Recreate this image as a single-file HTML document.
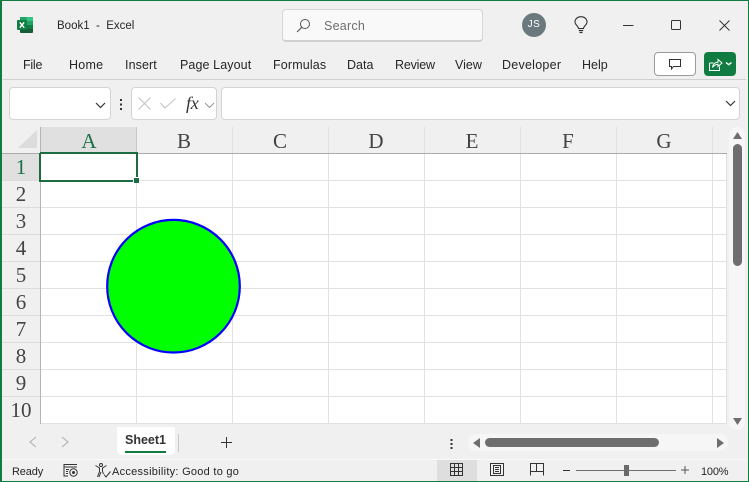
<!DOCTYPE html>
<html>
<head>
<meta charset="utf-8">
<style>
html,body{margin:0;padding:0;}
body{width:749px;height:482px;overflow:hidden;position:relative;background:#f0f0f0;font-family:"Liberation Sans",sans-serif;}
.t{position:absolute;white-space:nowrap;font-size:12.5px;line-height:16px;color:#262626;letter-spacing:.25px;}
.b{position:absolute;box-sizing:border-box;}
.ch{position:absolute;top:129px;width:96px;text-align:center;font:21px/24px "Liberation Serif",serif;color:#444;}
.rh{position:absolute;left:2px;width:38px;text-align:center;font:21px/27px "Liberation Serif",serif;color:#444;}
svg{position:absolute;overflow:visible;}
</style>
</head>
<body>
<!-- title bar -->
<svg style="left:17px;top:17px" width="16" height="16" viewBox="0 0 16 16">
<rect x="3" y="0" width="13" height="16" rx="1" fill="#185c37"/>
<rect x="3" y="0" width="13" height="4" fill="#21a366"/>
<rect x="9.500" y="0" width="6.500" height="4" fill="#33c481"/>
<rect x="3" y="4" width="13" height="4" fill="#21a366"/>
<rect x="3" y="8" width="13" height="4" fill="#107c41"/>
<rect x="0" y="3" width="10" height="10" rx="1" fill="#107c41"/>
<path d="M2.800 5.300L7.200 10.700M7.200 5.300L2.800 10.700" stroke="#fff" stroke-width="1.500" fill="none"/>
</svg>
<div class="t" style="left:57px;top:18px;font-size:11.500px;letter-spacing:0;">Book1&nbsp; - &nbsp;Excel</div>

<div class="b" style="left:282px;top:9px;width:201px;height:33px;background:#f9f9f9;border:1px solid #d6d6d6;border-bottom:2px solid #cfcfcf;border-radius:4px;"></div>
<svg style="left:296px;top:18px" width="15" height="15" viewBox="0 0 15 15"><circle cx="9" cy="6" r="4.500" fill="none" stroke="#555" stroke-width="1"/><path d="M5.700 9.300L1 14" stroke="#555" stroke-width="1.100" fill="none"/></svg>
<div class="t" style="left:324px;top:18px;color:#6e6e6e;">Search</div>

<div class="b" style="left:522px;top:13px;width:24px;height:24px;border-radius:50%;background:#69797e;color:#fff;font-size:10px;line-height:24px;text-align:center;letter-spacing:.5px;">JS</div>
<svg style="left:574px;top:16px" width="14" height="18" viewBox="0 0 14 18"><path d="M4.500 12.500C4.500 10 1 9 1 6C1 2.800 3.700 .7 7 .7S13 2.800 13 6C13 9 9.500 10 9.500 12.500Z" fill="none" stroke="#333" stroke-width="1.100"/><path d="M4.800 14.500H9.200M5.500 16.500H8.500" stroke="#333" stroke-width="1.300" fill="none"/></svg>
<svg style="left:623px;top:25px" width="11" height="1" viewBox="0 0 11 1"><rect width="10.500" height="1" fill="#333"/></svg>
<svg style="left:671px;top:20px" width="10" height="10" viewBox="0 0 10 10"><rect x=".5" y=".5" width="9" height="9" rx="1" fill="none" stroke="#333" stroke-width="1"/></svg>
<svg style="left:719px;top:20px" width="11" height="11" viewBox="0 0 11 11"><path d="M.5 .5L10.500 10.500M10.500 .5L.5 10.500" stroke="#333" stroke-width="1" fill="none"/></svg>

<!-- menu -->
<div class="t" style="left:23px;top:57px;letter-spacing:-.25px;">File</div>
<div class="t" style="left:69px;top:57px;">Home</div>
<div class="t" style="left:125px;top:57px;letter-spacing:.1px;">Insert</div>
<div class="t" style="left:180px;top:57px;letter-spacing:.1px;">Page Layout</div>
<div class="t" style="left:273px;top:57px;letter-spacing:.15px;">Formulas</div>
<div class="t" style="left:347px;top:57px;letter-spacing:0;">Data</div>
<div class="t" style="left:395px;top:57px;letter-spacing:-.2px;">Review</div>
<div class="t" style="left:455px;top:57px;letter-spacing:0;">View</div>
<div class="t" style="left:502px;top:57px;">Developer</div>
<div class="t" style="left:582px;top:57px;letter-spacing:0;">Help</div>

<div class="b" style="left:654px;top:52px;width:42px;height:24px;background:#fff;border:1px solid #9b9b9b;border-radius:4px;"></div>
<svg style="left:669px;top:59px" width="12" height="11" viewBox="0 0 12 11"><path d="M.5 .5H11.500V7.500H4.500L2.500 10V7.500H.5Z" fill="none" stroke="#333" stroke-width="1"/></svg>
<div class="b" style="left:704px;top:52px;width:32px;height:24px;background:#107c41;border-radius:4px;"></div>
<svg style="left:709px;top:58px" width="24" height="13" viewBox="0 0 24 13"><path d="M.5 5V12.500H10.500V8.500M.5 5L4.500 5" fill="none" stroke="#fff" stroke-width="1"/><path d="M3.500 9.500C4 6 6 4.300 9 4.300V1.500L13 5L9 8.500V6.200C7 6.200 5 7.500 3.500 9.500Z" fill="none" stroke="#fff" stroke-width="1"/><path d="M17 4.500L19.800 6.700L22.500 4.500" fill="none" stroke="#fff" stroke-width="1.400"/></svg>

<!-- ribbon separator -->
<div class="b" style="left:3px;top:79px;width:743px;height:1px;background:#d0d0d0;"></div>

<!-- formula bar -->
<div class="b" style="left:9px;top:87px;width:102px;height:33px;background:#fff;border:1px solid #d4d4d4;border-radius:4px;"></div>
<svg style="left:95px;top:102px" width="12" height="7" viewBox="0 0 12 7"><path d="M1 1L5.500 5.500L10 1" fill="none" stroke="#333" stroke-width="1.200"/></svg>
<svg style="left:119px;top:99px" width="4" height="11" viewBox="0 0 4 11"><rect x="1" y="0" width="2" height="2" fill="#333"/><rect x="1" y="4.500" width="2" height="2" fill="#333"/><rect x="1" y="9" width="2" height="2" fill="#333"/></svg>
<div class="b" style="left:131px;top:87px;width:86px;height:33px;background:#fff;border:1px solid #d4d4d4;border-radius:4px;"></div>
<svg style="left:138px;top:97px" width="13" height="13" viewBox="0 0 13 13"><path d="M.5 .5L12.500 12.500M12.500 .5L.5 12.500" stroke="#c4c4c4" stroke-width="1.100" fill="none"/></svg>
<svg style="left:160px;top:98px" width="16" height="11" viewBox="0 0 16 11"><path d="M.5 5L5 10L15.500 .5" stroke="#c4c4c4" stroke-width="1.100" fill="none"/></svg>
<div class="t" style="left:186px;top:93px;font:italic 18px/20px 'Liberation Serif',serif;color:#333;letter-spacing:-.3px;">fx</div>
<svg style="left:204px;top:102px" width="12" height="7" viewBox="0 0 12 7"><path d="M1 1L5.500 5.500L10 1" fill="none" stroke="#999" stroke-width="1.100"/></svg>
<div class="b" style="left:221px;top:87px;width:519px;height:33px;background:#fff;border:1px solid #d4d4d4;border-radius:4px;"></div>
<svg style="left:725px;top:100px" width="12" height="7" viewBox="0 0 12 7"><path d="M1 1L5.500 5.500L10 1" fill="none" stroke="#333" stroke-width="1.200"/></svg>

<!-- grid -->
<svg style="left:0;top:0" width="749" height="482" viewBox="0 0 749 482" shape-rendering="crispEdges">
<rect x="2" y="127" width="725" height="26" fill="#f0f0f0"/>
<rect x="41" y="153" width="686" height="271" fill="#fff"/>
<rect x="41" y="127" width="96" height="26" fill="#e0e0e0"/>
<rect x="2" y="154" width="38" height="27" fill="#e0e0e0"/>
<path d="M18 148H37V130Z" fill="#dcdcdc" shape-rendering="auto"/>
<g fill="#e1e1e1">
<rect x="136" y="153" width="1" height="271"/><rect x="232" y="153" width="1" height="271"/><rect x="328" y="153" width="1" height="271"/><rect x="424" y="153" width="1" height="271"/><rect x="520" y="153" width="1" height="271"/><rect x="616" y="153" width="1" height="271"/><rect x="712" y="153" width="1" height="271"/><rect x="726" y="153" width="1" height="271"/>
<rect x="41" y="180" width="686" height="1"/><rect x="41" y="207" width="686" height="1"/><rect x="41" y="234" width="686" height="1"/><rect x="41" y="261" width="686" height="1"/><rect x="41" y="288" width="686" height="1"/><rect x="41" y="315" width="686" height="1"/><rect x="41" y="342" width="686" height="1"/><rect x="41" y="369" width="686" height="1"/><rect x="41" y="396" width="686" height="1"/><rect x="41" y="423" width="686" height="1"/>
<rect x="232" y="127" width="1" height="26"/><rect x="328" y="127" width="1" height="26"/><rect x="424" y="127" width="1" height="26"/><rect x="520" y="127" width="1" height="26"/><rect x="616" y="127" width="1" height="26"/><rect x="712" y="127" width="1" height="26"/>
</g>
<rect x="136" y="127" width="1" height="26" fill="#c8c8c8"/>
<rect x="40" y="127" width="1" height="297" fill="#b4b4b4"/>
<rect x="2" y="153" width="725" height="1" fill="#ababab"/>
<g fill="#dcdcdc"><rect x="2" y="180" width="38" height="1"/><rect x="2" y="207" width="38" height="1"/><rect x="2" y="234" width="38" height="1"/><rect x="2" y="261" width="38" height="1"/><rect x="2" y="288" width="38" height="1"/><rect x="2" y="315" width="38" height="1"/><rect x="2" y="342" width="38" height="1"/><rect x="2" y="369" width="38" height="1"/><rect x="2" y="396" width="38" height="1"/></g>
<path d="M40 153H137V180M135 181H40V153" fill="none" stroke="#1d6b43" stroke-width="2"/>
<rect x="133" y="177" width="6" height="6" fill="#fff"/>
<rect x="134" y="178" width="5" height="5" fill="#1d6b43"/>
</svg>

<div class="ch" style="left:41px;color:#1b7045;">A</div>
<div class="ch" style="left:136px;">B</div>
<div class="ch" style="left:232px;">C</div>
<div class="ch" style="left:328px;">D</div>
<div class="ch" style="left:424px;">E</div>
<div class="ch" style="left:520px;">F</div>
<div class="ch" style="left:616px;">G</div>

<div class="rh" style="top:154px;color:#1b7045;">1</div>
<div class="rh" style="top:181px;">2</div>
<div class="rh" style="top:208px;">3</div>
<div class="rh" style="top:235px;">4</div>
<div class="rh" style="top:262px;">5</div>
<div class="rh" style="top:289px;">6</div>
<div class="rh" style="top:316px;">7</div>
<div class="rh" style="top:343px;">8</div>
<div class="rh" style="top:370px;">9</div>
<div class="rh" style="top:397px;">10</div>

<!-- circle -->
<svg style="left:0;top:0" width="749" height="482" viewBox="0 0 749 482"><circle cx="173.500" cy="286.200" r="66.300" fill="#00ff00" stroke="#0000ff" stroke-width="2.200"/></svg>

<!-- vertical scrollbar -->
<div class="b" style="left:729px;top:127px;width:16px;height:303px;background:#f6f6f6;border-radius:8px;"></div>
<svg style="left:733px;top:132px" width="9" height="7" viewBox="0 0 9 7"><path d="M4.500 0L9 7H0Z" fill="#6e6e6e"/></svg>
<div class="b" style="left:733px;top:144px;width:9px;height:122px;background:#6e6e6e;border-radius:5px;"></div>
<svg style="left:733px;top:418px" width="9" height="7" viewBox="0 0 9 7"><path d="M0 0H9L4.500 7Z" fill="#6e6e6e"/></svg>

<!-- sheet tabs -->
<svg style="left:29px;top:436px" width="50" height="12" viewBox="0 0 50 12"><path d="M7 1L1 6L7 11M33 1L39 6L33 11" fill="none" stroke="#b0b0b0" stroke-width="1.100"/></svg>
<div class="b" style="left:117px;top:427px;width:58px;height:28px;background:#fff;border-radius:0 0 5px 5px;"></div>
<div class="t" style="left:125px;top:432px;font-weight:bold;color:#333;letter-spacing:0;font-size:12.500px;">Sheet1</div>
<div class="b" style="left:125px;top:451px;width:41px;height:2px;background:#107c41;"></div>
<div class="b" style="left:178px;top:434px;width:1px;height:18px;background:#c8c8c8;"></div>
<svg style="left:221px;top:437px" width="11" height="11" viewBox="0 0 11 11"><path d="M5.500 0V11M0 5.500H11" stroke="#333" stroke-width="1" fill="none"/></svg>
<svg style="left:450px;top:439px" width="3" height="10" viewBox="0 0 3 10"><rect width="2" height="2" x=".5" fill="#333"/><rect width="2" height="2" x=".5" y="4" fill="#333"/><rect width="2" height="2" x=".5" y="8" fill="#333"/></svg>

<!-- horizontal scrollbar -->
<div class="b" style="left:468px;top:434px;width:260px;height:17px;background:#f6f6f6;border-radius:8px;"></div>
<svg style="left:473px;top:438px" width="7" height="10" viewBox="0 0 7 10"><path d="M7 0V10L0 5Z" fill="#6e6e6e"/></svg>
<div class="b" style="left:485px;top:438px;width:174px;height:9px;background:#6e6e6e;border-radius:5px;"></div>
<svg style="left:717px;top:438px" width="7" height="10" viewBox="0 0 7 10"><path d="M0 0V10L7 5Z" fill="#6e6e6e"/></svg>

<!-- status bar -->
<div class="b" style="left:3px;top:459px;width:743px;height:1px;background:#fafafa;"></div>
<div class="t" style="left:12px;top:464px;font-size:11px;letter-spacing:-.15px;">Ready</div>
<svg style="left:63px;top:464px" width="15" height="13" viewBox="0 0 15 13"><path d="M.5 .5H14M.5 3H14M1 .5V12H5M3 5.500H6M3 7.500H5M3 9.500H5" stroke="#333" stroke-width="1" fill="none"/><circle cx="10.500" cy="8.500" r="3.700" fill="none" stroke="#333"/><circle cx="10.500" cy="8.500" r="1.500" fill="#333"/></svg>
<svg style="left:95px;top:463px" width="16" height="15" viewBox="0 0 16 15"><circle cx="6" cy="2" r="1.500" fill="none" stroke="#333"/><path d="M.5 2.500L4.500 5V8.500L2.500 14M11.500 2.500L7.500 5V8.500L8.500 11M6 9L4 14" fill="none" stroke="#333"/><path d="M9 11.500L11 14L15.500 8.500" fill="none" stroke="#333"/></svg>
<div class="t" style="left:112px;top:464px;font-size:11px;letter-spacing:.27px;">Accessibility: Good to go</div>

<div class="b" style="left:437px;top:460px;width:40px;height:21px;background:#dedede;"></div>
<svg style="left:450px;top:463px" width="13" height="13" viewBox="0 0 13 13" shape-rendering="crispEdges"><path d="M.5 .5H12.500V12.500H.5ZM.5 4.500H12.500M.5 8.500H12.500M4.500 .5V12.500M8.500 .5V12.500" fill="none" stroke="#333"/></svg>
<svg style="left:490px;top:463px" width="14" height="13" viewBox="0 0 14 13" shape-rendering="crispEdges"><path d="M.5 .5H13.500V12.500H.5ZM3.500 2.500H10.500V10.500H3.500ZM5 4.500H9M5 6.500H9M5 8.500H9" fill="none" stroke="#333"/></svg>
<svg style="left:530px;top:463px" width="14" height="13" viewBox="0 0 14 13" shape-rendering="crispEdges"><path d="M.5 12.500V.5H13.500V12.500M.5 8.500H13.500M6.500 .5V8.500" fill="none" stroke="#333"/></svg>
<svg style="left:563px;top:470px" width="8" height="1" viewBox="0 0 8 1"><rect width="7" height="1" fill="#333"/></svg>
<div class="b" style="left:576px;top:470px;width:100px;height:1px;background:#707070;"></div>
<div class="b" style="left:624px;top:465px;width:5px;height:11px;background:#6a6a6a;"></div>
<svg style="left:681px;top:466px" width="8" height="8" viewBox="0 0 8 8"><path d="M4 0V8M0 4H8" stroke="#555" stroke-width="1" fill="none"/></svg>
<div class="t" style="left:701px;top:464px;font-size:11px;letter-spacing:-.2px;">100%</div>

<!-- window border -->
<div class="b" style="left:0;top:0;width:749px;height:482px;border:1px solid #107c41;border-left-width:2px;border-right-width:1px;"></div>
</body>
</html>
